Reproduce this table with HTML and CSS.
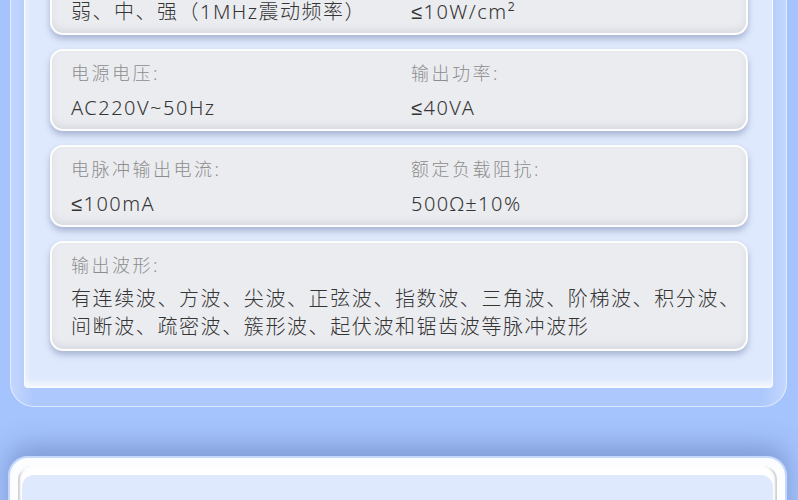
FILE: index.html
```html
<!DOCTYPE html>
<html lang="zh-CN">

<head>
    <meta charset="UTF-8">
    <meta name="viewport" content="width=device-width, initial-scale=1.0">
    <title>产品参数</title>
    <link rel="stylesheet" href="styles.css">
</head>

<body>
    <main class="page">
        <section class="spec-panel">
            <div class="spec-inner">
                <div class="spec-card">
                    <div class="spec-item">
                        <div class="spec-label">超声强度:</div>
                        <div class="spec-value">弱、中、强（1MHz震动频率）</div>
                    </div>
                    <div class="spec-item">
                        <div class="spec-label">有效声强:</div>
                        <div class="spec-value">≤10W/cm²</div>
                    </div>
                </div>

                <div class="spec-card">
                    <div class="spec-item">
                        <div class="spec-label">电源电压:</div>
                        <div class="spec-value">AC220V~50Hz</div>
                    </div>
                    <div class="spec-item">
                        <div class="spec-label">输出功率:</div>
                        <div class="spec-value">≤40VA</div>
                    </div>
                </div>

                <div class="spec-card">
                    <div class="spec-item">
                        <div class="spec-label">电脉冲输出电流:</div>
                        <div class="spec-value">≤100mA</div>
                    </div>
                    <div class="spec-item">
                        <div class="spec-label">额定负载阻抗:</div>
                        <div class="spec-value">500Ω±10%</div>
                    </div>
                </div>

                <div class="spec-card spec-card-wide">
                    <div class="spec-item">
                        <div class="spec-label">输出波形:</div>
                        <div class="spec-text">有连续波、方波、尖波、正弦波、指数波、三角波、阶梯波、积分波、间断波、疏密波、簇形波、起伏波和锯齿波等脉冲波形</div>
                    </div>
                </div>
            </div>
        </section>

        <section class="next-panel">
            <div class="next-frame">
                <div class="next-body"></div>
            </div>
        </section>
    </main>
</body>

</html>
```

FILE: styles.css
```css
body,
html {
    margin: 0;
    padding: 0;
    height: 100%;
    width: 100%;
    overflow: hidden;
    font-family: "Noto Sans", "Liberation Sans", "Noto Sans CJK SC", sans-serif;
    background-color: #a5c3fc;
}

.page {
    padding-top: 1px;
}

.spec-panel {
    margin: -87px 11px 0 10px;
    padding: 13px 13px 18px 13px;
    border: 1px solid rgba(255, 255, 255, 0.55);
    border-radius: 24px;
    background: linear-gradient(to right, #c3d7fd, #adc8fc 3%, #adc8fc 97%, #c3d7fd);
}

.spec-inner {
    display: flex;
    flex-direction: column;
    gap: 14px;
    padding: 24px 24px 36px 25px;
    border: 1px solid rgba(255, 255, 255, 0.8);
    border-radius: 4px;
    background-color: #dfe9fd;
    box-shadow: inset 0 -8px 6px -4px rgba(255, 255, 255, 0.7),
        inset 4px 0 6px -3px rgba(255, 255, 255, 0.6);
}

.spec-card {
    display: grid;
    grid-template-columns: 340px 1fr;
    padding: 10px 20px 8px 19px;
    border: 2px solid rgba(255, 255, 255, 0.9);
    border-radius: 13px;
    background-color: #ebecf0;
    box-shadow: 0 4px 6px rgba(70, 90, 135, 0.35),
        inset 0 -4px 6px rgba(150, 158, 178, 0.2);
}

.spec-card-wide {
    grid-template-columns: 1fr;
    padding-right: 0;
}

.spec-label {
    font-size: 18px;
    line-height: 24px;
    letter-spacing: 2.5px;
    color: #8d8d8d;
    font-weight: 300;
}

.spec-value {
    margin-top: 10px;
    font-size: 20px;
    line-height: 26px;
    letter-spacing: 1.5px;
    color: #353535;
    font-weight: 300;
    white-space: nowrap;
}

.spec-text {
    margin-top: 8px;
    font-size: 20px;
    line-height: 28px;
    letter-spacing: 1.6px;
    color: #353535;
    font-weight: 300;
}

.next-panel {
    margin: 49px 11px 0 8px;
    padding: 8px 8px 0 8px;
    border: 2px solid #c6d9fd;
    border-radius: 20px;
    background-color: #fbfdff;
    box-shadow: 0 -10px 26px rgba(80, 105, 165, 0.45);
}

.next-frame {
    padding: 9px 4px 0 4px;
    border-radius: 14px;
    background-color: #ffffff;
    box-shadow: inset 2px 10px 2px -8px rgba(255, 255, 255, 1),
        inset 2px 0 2px rgba(120, 120, 130, 0.35),
        inset -2px 0 2px rgba(120, 120, 130, 0.35);
}

.next-body {
    height: 120px;
    border-radius: 12px;
    background-color: #dfe9fd;
}
```
